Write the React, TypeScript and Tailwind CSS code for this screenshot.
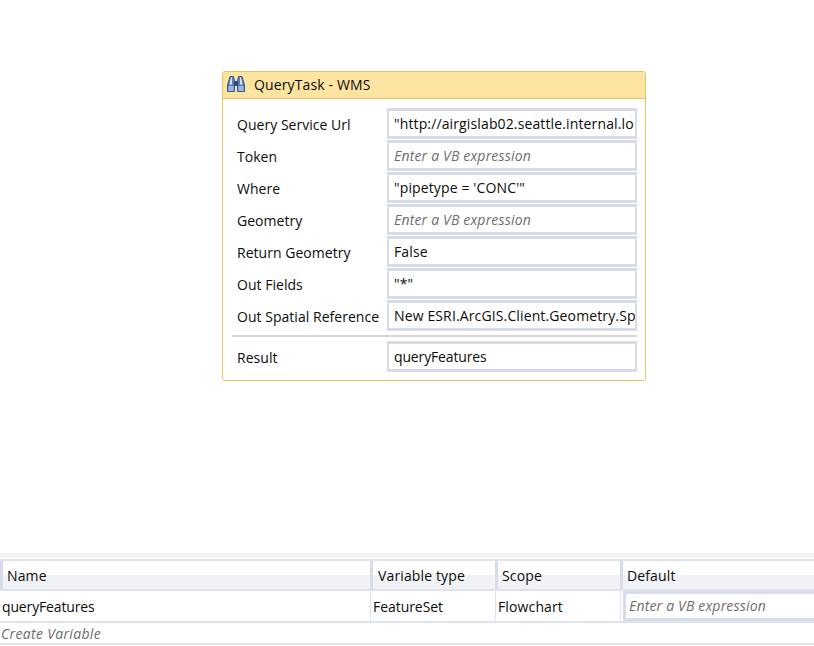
const font = "[font-family:'Open_Sans','Noto_Sans',sans-serif]"

const rows = [
  { label: "Query Service Url", value: "\"http://airgislab02.seattle.internal.lo" },
  { label: "Token", hint: true, value: "Enter a VB expression" },
  { label: "Where", value: "\"pipetype = 'CONC'\"" },
  { label: "Geometry", hint: true, value: "Enter a VB expression" },
  { label: "Return Geometry", value: "False" },
  { label: "Out Fields", value: "\"*\"" },
  { label: "Out Spatial Reference", value: "New ESRI.ArcGIS.Client.Geometry.Sp" },
]

const Binoculars = () => (
  <svg width="20" height="18" viewBox="0 0 20 18" className="shrink-0">
    <path d="M4 1.5h3.5l1 4v11H1.5V10z" fill="#5b7db5" stroke="#3d5a94" strokeWidth="1" />
    <path d="M12.5 1.5H16l2.5 8.5v6.500h-7v-11z" fill="#5b7db5" stroke="#3d5a94" strokeWidth="1" />
    <path d="M8 6h4v5H8z" fill="#33497f" />
    <path d="M2.500 11h5v5h-5zM12.500 11h5v5h-5z" fill="#9db8e0" />
    <path d="M5 2.500h1v7H3.500zM14 2.500h1l1.500 7H14z" fill="#dbe6f7" />
  </svg>
)

const Field = ({ label, value, hint, tight }: { label: string; value: string; hint?: boolean; tight?: boolean }) => (
  <div className="flex h-[32px] items-start">
    <span className="flex h-[32px] w-[150px] shrink-0 items-center whitespace-nowrap tracking-[0.03px]">{label}</span>
    <div className="flex h-[31px] w-[250px] shrink-0 items-center overflow-hidden border-2 border-y-[3px] border-[#d6dce9] bg-white pl-[5px]">
      <span className={hint ? "whitespace-nowrap italic tracking-[0.18px] text-[#6d6d6d]" : tight ? "whitespace-nowrap tracking-[-0.15px]" : "whitespace-nowrap"}>{value}</span>
    </div>
  </div>
)

const HeadCell = ({ label, className }: { label: string; className: string }) => (
  <div className={`flex h-full items-center border-l-[3px] border-[#d6dce9] ${className}`}>{label}</div>
)

export default function App() {
  return (
    <div className={`flex h-[646px] w-[814px] flex-col overflow-hidden bg-white text-[14px] tracking-[0.13px] text-[#0c0c0c] ${font}`}>
      <div className="ml-[222px] mt-[71px] h-[310px] w-[424px] rounded-[3px] border border-[#e8c163]">
        <div className="flex h-[27px] items-center gap-[8px] border-b border-[#e8c163] bg-[#fde4a1] pb-[2px] pl-[3px]">
          <Binoculars />
          <span>QueryTask - WMS</span>
        </div>
        <div className="pl-[14px] pr-[8px] pt-[9px]">
          {rows.map(r => <Field key={r.label} {...r} />)}
          <div className="-ml-[5px] mt-[3px] h-[2px] bg-[#d8d8d8]" />
          <div className="mt-[4px]">
            <Field label="Result" value="queryFeatures" tight />
          </div>
        </div>
      </div>

      <div className="mt-[172px] h-[5px] bg-[#f3f3f3]" />
      <div className="h-[1px] bg-white" />
      <div className="flex h-[32px] border-y-2 border-[#dfe3ed] bg-[linear-gradient(#ffffff_50%,#f0f2f6_50%)]">
        <HeadCell label="Name" className="w-[370px] border-l-2 pl-[4px]" />
        <HeadCell label="Variable type" className="w-[125px] pl-[5px]" />
        <HeadCell label="Scope" className="w-[125px] pl-[4px]" />
        <HeadCell label="Default" className="flex-1 pl-[4px]" />
      </div>
      <div className="flex h-[32px] border-b-2 border-[#dfe3ed]">
        <div className="flex w-[370px] items-center pl-[2px] tracking-[-0.15px]">queryFeatures</div>
        <div className="flex w-[125px] items-center border-l border-[#dfe3ed] pl-[2px] tracking-[-0.05px]">FeatureSet</div>
        <div className="flex w-[125px] items-center border-l border-[#dfe3ed] pl-[2px]">Flowchart</div>
        <div className="flex flex-1 items-center border-l border-[#dfe3ed] pl-[2px]">
          <div className="flex h-[30px] w-full items-center border-[3px] border-r-0 border-[#d6dce9] pb-[1px] pl-[3px] italic tracking-[0.18px] text-[#6d6d6d]">Enter a VB expression</div>
        </div>
      </div>
      <div className="flex h-[22px] items-center border-b-2 border-[#dfe3ed] pl-[1px] italic tracking-[0.33px] text-[#6d6d6d]">Create Variable</div>
    </div>
  )
}
